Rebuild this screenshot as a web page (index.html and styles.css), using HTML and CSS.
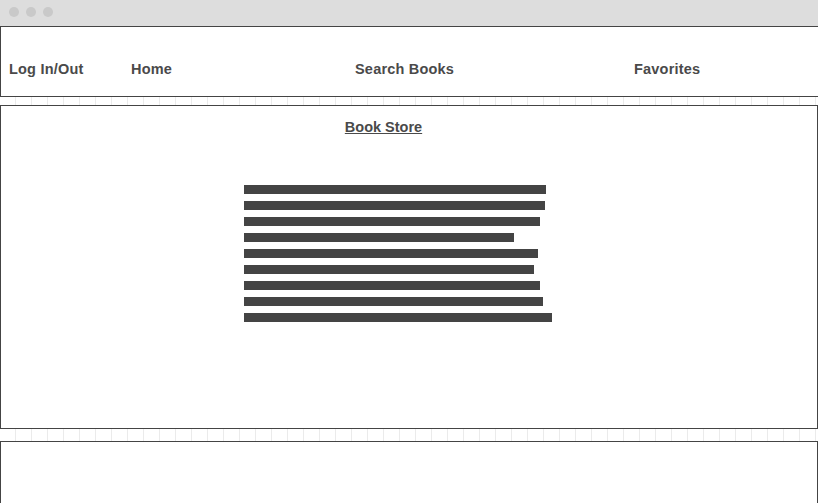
FILE: index.html
```html
<!DOCTYPE html>
<html>
<head>
<meta charset="utf-8">
<title>Book Store</title>
<link rel="stylesheet" href="styles.css">
</head>
<body>
<div class="titlebar">
  <span class="dot"></span><span class="dot"></span><span class="dot"></span>
</div>
<nav class="nav">
  <span class="nav-item">Log In/Out</span>
  <span class="nav-item">Home</span>
  <span class="nav-item">Search Books</span>
  <span class="nav-item">Favorites</span>
</nav>
<main class="main">
  <div class="heading"><span class="heading-text">Book Store</span></div>
  <div class="lines">
    <div class="line" style="width:302px"></div>
    <div class="line" style="width:301px"></div>
    <div class="line" style="width:296px"></div>
    <div class="line" style="width:270px"></div>
    <div class="line" style="width:294px"></div>
    <div class="line" style="width:290px"></div>
    <div class="line" style="width:296px"></div>
    <div class="line" style="width:299px"></div>
    <div class="line" style="width:308px"></div>
  </div>
</main>
<footer class="footer"></footer>
</body>
</html>
```
FILE: styles.css
```css
html, body {
  margin: 0;
  padding: 0;
}
body {
  width: 818px;
  height: 503px;
  overflow: hidden;
  font-family: "Liberation Sans", Arial, sans-serif;
  color: #4a4a4a;
  background-color: #fff;
  background-image: repeating-linear-gradient(to right, transparent 0 15px, #ebebeb 15px 16px);
}
.titlebar {
  height: 26px;
  background: #dddddd;
  display: flex;
  align-items: flex-start;
  gap: 7px;
  padding: 7px 0 0 9px;
  box-sizing: border-box;
}
.dot {
  width: 10px;
  height: 10px;
  border-radius: 50%;
  background: #c9c9c9;
}
.nav {
  height: 71px;
  box-sizing: border-box;
  margin-right: -20px;
  border: 1px solid #444;
  border-right: none;
  background: #fff;
  display: grid;
  grid-template-columns: 122px 224px 279px auto;
  padding-left: 8px;
}
.nav-item {
  font-weight: bold;
  font-size: 14.5px;
  line-height: 17px;
  letter-spacing: 0.2px;
  padding-top: 34px;
  white-space: nowrap;
}
.main {
  margin-top: 8px;
  width: 818px;
  height: 324px;
  box-sizing: border-box;
  border: 1px solid #444;
  background: #fff;
}
.heading {
  width: 765px;
  text-align: center;
  padding-top: 13px;
  font-weight: bold;
  font-size: 14.5px;
  line-height: 17px;
}
.heading-text {
  text-decoration: underline;
}
.lines {
  display: flex;
  flex-direction: column;
  gap: 7px;
  margin-top: 49px;
  padding-left: 243px;
}
.line {
  height: 9px;
  background: #444;
}
.footer {
  margin-top: 12px;
  width: 818px;
  height: 80px;
  box-sizing: border-box;
  border: 1px solid #444;
  background: #fff;
}
```
